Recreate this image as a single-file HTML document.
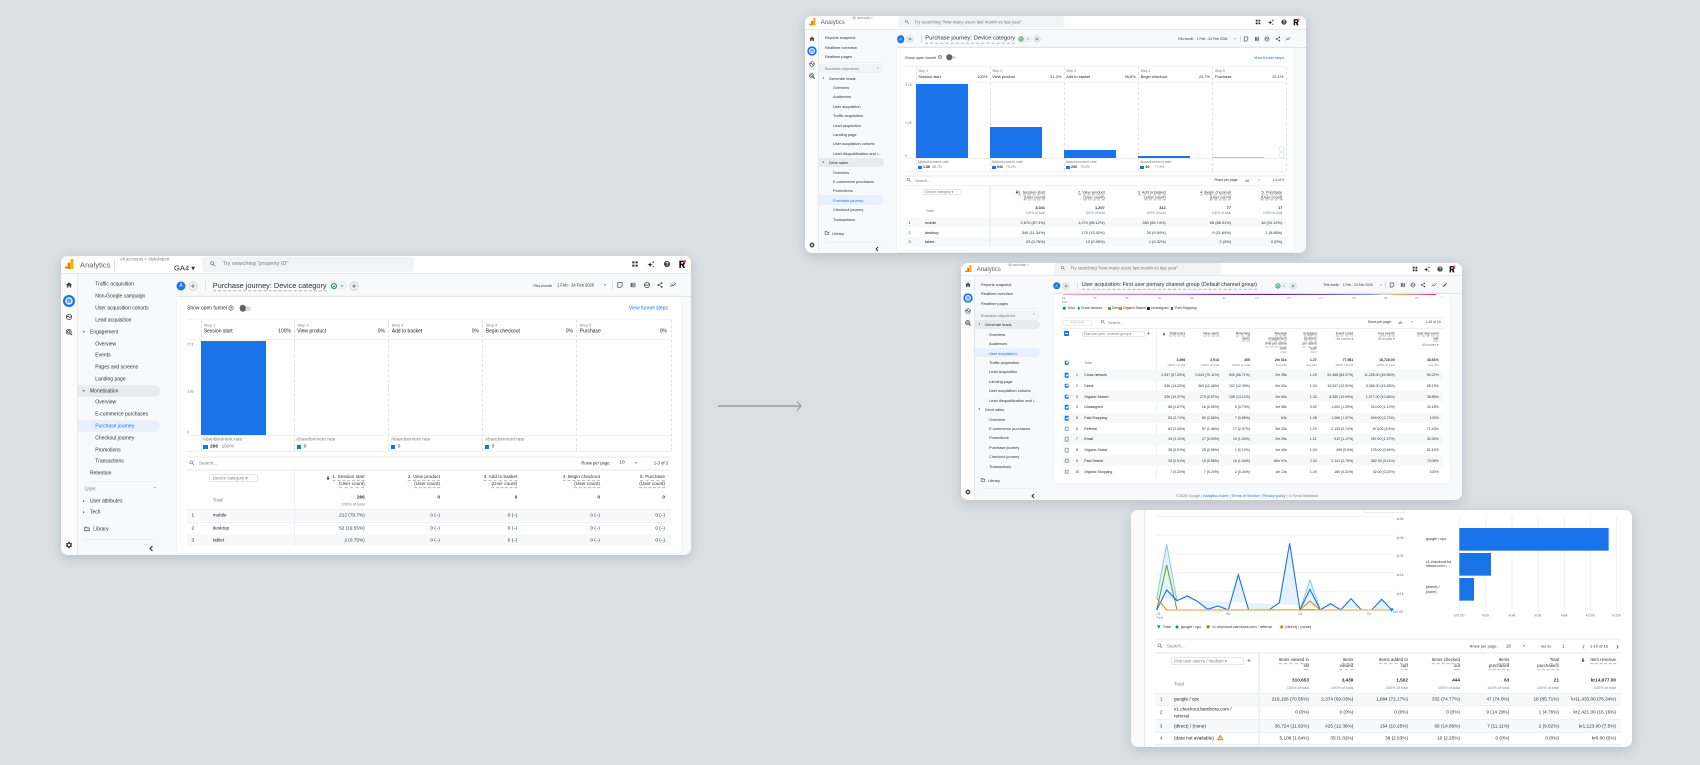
<!DOCTYPE html>
<html lang="en"><head><meta charset="utf-8"><title>Analytics reports</title>
<style>
html,body{margin:0;padding:0}
body{width:1700px;height:765px;overflow:hidden;background:#d9dfe3;position:relative;font-family:"Liberation Sans",sans-serif;color:#2d3033}
#w{position:absolute;left:0;top:0;width:1700px;height:765px;filter:blur(.3px)}
p{position:absolute;margin:0;white-space:nowrap;line-height:1;transform:translateY(-32%);color:#2d3033}
.g{color:#777c81}.bl{color:#1a73e8}.k{font-weight:bold}.d{color:#202124}
.e{transform:translate(-100%,-32%)}.m{transform:translate(-50%,-38%)}
.a{position:absolute}
.card{position:absolute;background:#f8f9fb;border-radius:7px;box-shadow:0 3px 11px rgba(60,70,80,.2)}
.top{position:absolute;background:#fff;border-radius:7px 7px 0 0;border-bottom:.7px solid #e6e8ea;box-sizing:border-box}
.rail{position:absolute;background:#fcfcfd;border-right:.7px solid #e6e8ea;box-sizing:border-box;border-radius:0 0 0 7px}
.w{position:absolute;background:#fff;box-shadow:0 0 2px rgba(0,0,0,.07)}
.srch{position:absolute;background:#f1f3f4;border-radius:3px}
.hl{position:absolute;background:#e8eaed;border-radius:0 6px 6px 0}
.ac{position:absolute;background:#e8f0fe;border-radius:0 6px 6px 0}
.h{position:absolute;height:.8px;background:#eef0f2}
.hh{position:absolute;height:1.5px;background:#f2f3f5}
.v{position:absolute;width:0;border-left:.7px dashed #e0e2e5}
.vv{position:absolute;width:1.4px;background:#eef0f2}
.bar{position:absolute;background:#1a73e8}
.sw{position:absolute;background:#1a73e8}
.row{position:absolute;background:#f7f8f9}
.chip{position:absolute;background:#fff;border:.6px solid #e4e6e9;border-radius:1.5px;box-sizing:border-box}
.pill{position:absolute;background:#eef1f4;border-radius:6px}
.u{border-bottom:.5px dashed #b4b8bc;padding-bottom:.3px}
.i{position:absolute;transform:translate(-50%,-50%);overflow:visible}
.c{position:absolute;top:0;width:0}
.c p{left:0}
.R p{transform:translate(-100%,-32%)}
.f1{font-size:5px}.f2{font-size:3.9px}.f3{font-size:3.9px}.f4{font-size:4.7px}
.s1{font-size:4px}.s2{font-size:3.4px}
.t1 p:nth-child(1){top:477px}.t1 p:nth-child(2){top:484px}.t1 p:nth-child(3){top:497px;font-weight:bold}.t1 p:nth-child(4){top:515.3px}.t1 p:nth-child(5){top:527.7px}.t1 p:nth-child(6){top:539.7px}
.t2 p:nth-child(1){top:191.7px}.t2 p:nth-child(2){top:196.7px}.t2 p:nth-child(3){top:207.3px;font-weight:bold}.t2 p:nth-child(4){top:213px;font-size:3.3px;color:#80868b}.t2 p:nth-child(5){top:222px}.t2 p:nth-child(6){top:231.7px}.t2 p:nth-child(7){top:241.3px}
.t3 p:nth-child(1){top:359.7px;font-weight:bold}.t3 p:nth-child(2){top:365.3px;font-size:3.1px;color:#80868b}.t3 p:nth-child(3){top:375px}.t3 p:nth-child(4){top:385.7px}.t3 p:nth-child(5){top:396.7px}.t3 p:nth-child(6){top:407.3px}.t3 p:nth-child(7){top:418px}.t3 p:nth-child(8){top:428.7px}.t3 p:nth-child(9){top:439.3px}.t3 p:nth-child(10){top:450px}.t3 p:nth-child(11){top:460.7px}.t3 p:nth-child(12){top:471.7px}
.t4 p:nth-child(1){top:680.3px;font-weight:bold}.t4 p:nth-child(2){top:687.7px;font-size:3.8px;color:#80868b}.t4 p:nth-child(3){top:699.3px}.t4 p:nth-child(4){top:712.3px}.t4 p:nth-child(5){top:725.7px}.t4 p:nth-child(6){top:738px}
.cb{position:absolute;width:4.6px;height:4.6px;background:#1a73e8;border-radius:.7px;transform:translate(-50%,-50%)}
.cb:after{content:"";position:absolute;left:1px;top:.7px;width:2.3px;height:1.1px;border-left:.6px solid #fff;border-bottom:.6px solid #fff;transform:rotate(-45deg)}
.cu{position:absolute;width:4.6px;height:4.6px;border:.6px solid #9aa0a6;box-sizing:border-box;border-radius:.6px;transform:translate(-50%,-50%)}
.dot{position:absolute;border-radius:50%;transform:translate(-50%,-50%)}
</style></head><body>
<svg width="0" height="0" style="position:absolute"><defs>
<symbol id="home" viewBox="0 0 24 24"><path fill="#3c4043" d="M10 20v-6h4v6h5v-8h3L12 3 2 12h3v8z"/></symbol>
<symbol id="rep" viewBox="0 0 24 24"><circle cx="12" cy="12" r="12" fill="#1a73e8"/><circle cx="12" cy="12" r="7.6" fill="#e8f0fe"/><path fill="#1a73e8" d="M8 8h8v8H8z" opacity=".75"/><path fill="#e8f0fe" d="M9.5 12h1v3h-1zM11.5 10h1v5h-1zM13.5 13h1v2h-1z"/></symbol>
<symbol id="exp" viewBox="0 0 24 24"><circle cx="12" cy="12" r="8.5" fill="none" stroke="#3c4043" stroke-width="2.4"/><path fill="none" stroke="#3c4043" stroke-width="2.2" d="M4 13l5-4 5 5 6-5"/></symbol>
<symbol id="adv" viewBox="0 0 24 24"><circle cx="11" cy="11" r="8" fill="none" stroke="#3c4043" stroke-width="2.4"/><circle cx="11" cy="11" r="3.5" fill="none" stroke="#3c4043" stroke-width="2.2"/><path stroke="#3c4043" stroke-width="3" d="M16 16l6 6"/></symbol>
<symbol id="gear" viewBox="0 0 24 24"><path fill="#3c4043" d="M19.14 12.94c.04-.3.06-.61.06-.94 0-.32-.02-.64-.07-.94l2.03-1.58a.49.49 0 0 0 .12-.61l-1.92-3.32a.49.49 0 0 0-.59-.22l-2.39.96c-.5-.38-1.03-.7-1.62-.94l-.36-2.54a.48.48 0 0 0-.48-.41h-3.84a.48.48 0 0 0-.47.41l-.36 2.54c-.59.24-1.13.57-1.62.94l-2.39-.96a.48.48 0 0 0-.59.22L2.74 8.87a.48.48 0 0 0 .12.61l2.03 1.58c-.05.3-.09.63-.09.94 0 .31.02.64.07.94l-2.03 1.58a.49.49 0 0 0-.12.61l1.92 3.32c.12.22.37.29.59.22l2.39-.96c.5.38 1.03.7 1.62.94l.36 2.54c.05.24.24.41.48.41h3.84c.24 0 .44-.17.47-.41l.36-2.54c.59-.24 1.13-.56 1.62-.94l2.39.96c.22.08.47 0 .59-.22l1.92-3.32a.49.49 0 0 0-.12-.61l-2.01-1.58zM12 15.6A3.6 3.6 0 1 1 12 8.4a3.6 3.6 0 0 1 0 7.2z"/></symbol>
<symbol id="apps" viewBox="0 0 24 24"><path fill="#202124" d="M3 3h7v7H3zM14 3h7v7h-7zM3 14h7v7H3zM14 14h7v7h-7z"/></symbol>
<symbol id="spk" viewBox="0 0 24 24"><path fill="#202124" d="M9 6l2.2 5.8L17 14l-5.8 2.2L9 22l-2.2-5.8L1 14l5.8-2.2zM19 2l1.2 2.8L23 6l-2.8 1.2L19 10l-1.2-2.8L15 6l2.8-1.2zM19 17l1 2 2 1-2 1-1 2-1-2-2-1 2-1z"/></symbol>
<symbol id="help" viewBox="0 0 24 24"><circle cx="12" cy="12" r="10.5" fill="#3c4043"/><path fill="none" stroke="#fff" stroke-width="2.6" d="M8.6 9.5c0-4.5 6.8-4.5 6.8 0 0 2.6-3.4 2.8-3.4 5.2"/><path fill="#fff" d="M10.7 16.2h2.6v2.6h-2.6z"/></symbol>
<symbol id="rr" viewBox="0 0 24 24"><path fill="#111" d="M4 2h10c5 0 7 3 7 6.500 0 3-1.600 5-4 6l4 9h-6l-3.500-8H9v8H4z"/><path fill="#fff" d="M9 6.500h4.500c1.500 0 2.500.8 2.500 2.200s-1 2.300-2.500 2.300H9z"/><circle cx="20" cy="4" r="4" fill="#ea4335"/></symbol>
<symbol id="srch" viewBox="0 0 24 24"><path fill="#5f6368" d="M15.5 14h-.79l-.28-.27A6.470 6.470 0 0 0 16 9.500 6.500 6.500 0 1 0 9.500 16c1.610 0 3.090-.59 4.230-1.570l.27.28v.79l5 4.990L20.490 19l-4.990-5zm-6 0C7.010 14 5 11.990 5 9.500S7.010 5 9.500 5 14 7.010 14 9.500 11.990 14 9.500 14z"/></symbol>
<symbol id="plus" viewBox="0 0 24 24"><circle cx="12" cy="12" r="11" fill="#fbfbfc" stroke="#bdc1c6" stroke-width="1.800"/><path stroke="#5f6368" stroke-width="2.200" d="M12 6v12M6 12h12"/></symbol>
<symbol id="chk" viewBox="0 0 24 24"><circle cx="12" cy="12" r="10" fill="none" stroke="#188038" stroke-width="3.500"/><path fill="none" stroke="#188038" stroke-width="3" d="M7 12l4 4 6-7"/></symbol>
<symbol id="note" viewBox="0 0 24 24"><path fill="none" stroke="#3c4043" stroke-width="2.600" d="M4 3h16v12l-6 6H4z"/></symbol>
<symbol id="cmp" viewBox="0 0 24 24"><path fill="#5f6368" d="M3 4h8v16H3zM13 2h2v20h-2zM17 4h4v16h-4z"/></symbol>
<symbol id="ins" viewBox="0 0 24 24"><circle cx="12" cy="12" r="9" fill="none" stroke="#3c4043" stroke-width="2.400"/><path fill="none" stroke="#3c4043" stroke-width="2.200" d="M4 14l5-4 4 4 7-6"/></symbol>
<symbol id="shr" viewBox="0 0 24 24"><path fill="none" stroke="#3c4043" stroke-width="2" d="M18 5L6 12l12 7"/><circle cx="18" cy="5" r="3.200" fill="#3c4043"/><circle cx="6" cy="12" r="3.200" fill="#3c4043"/><circle cx="18" cy="19" r="3.200" fill="#3c4043"/></symbol>
<symbol id="trd" viewBox="0 0 24 24"><path fill="none" stroke="#3c4043" stroke-width="2.200" d="M2 18l7-7 4 4 9-9"/><path fill="#3c4043" d="M16 3l2 2-2 2-2-2zM5 5l1.500 1.500L5 8 3.500 6.500z"/></symbol>
<symbol id="pen" viewBox="0 0 24 24"><path fill="#3c4043" d="M3 17.250V21h3.750L17.810 9.940l-3.750-3.750zM20.710 7.040a1 1 0 0 0 0-1.410l-2.340-2.340a1 1 0 0 0-1.410 0l-1.830 1.830 3.750 3.750z"/></symbol>
<symbol id="q" viewBox="0 0 24 24"><circle cx="12" cy="12" r="9.500" fill="none" stroke="#3c4043" stroke-width="2.400"/><path fill="none" stroke="#3c4043" stroke-width="2.200" d="M9.300 10c0-3.300 5.400-3.300 5.400 0 0 2-2.700 2-2.700 4"/><path fill="#3c4043" d="M11 15.500h2v2h-2z"/></symbol>
<symbol id="lib" viewBox="0 0 24 24"><path fill="none" stroke="#3c4043" stroke-width="2.600" d="M3 5h7l2 3h9v11H3z"/></symbol>
<symbol id="dn" viewBox="0 0 24 24"><path fill="#5f6368" d="M5 8h14l-7 9z"/></symbol>
<symbol id="darr" viewBox="0 0 24 24"><path fill="#3c4043" d="M9 2h6v11h6L12 23 3 13h6z"/></symbol>
<symbol id="logo" viewBox="0 0 20 24"><path fill="#f9ab00" d="M13 0h7v24h-7z"/><path fill="#e37400" d="M6.500 9h6v15h-6z"/><circle cx="3" cy="20.500" r="3" fill="#e37400"/></symbol>
</defs></svg>
<div id="w">

<!-- arrow -->
<div class="a" style="left:718px;top:405.300px;width:83px;height:1.500px;background:#a9adaf"></div>
<svg class="a" style="left:795px;top:401px;width:7px;height:10px"><path d="M2 .5L6 5 2 9.500" fill="none" stroke="#8f9497" stroke-width="1"/></svg>

<!-- CARD 1 -->
<div class="card" style="left:61px;top:256px;width:629.500px;height:299px"></div>
<div class="top" style="left:61px;top:256px;width:629.500px;height:18px"></div>
<div class="rail" style="left:61px;top:274px;width:17px;height:281px"></div>
<div class="w" style="left:177px;top:296px;width:503.700px;height:257.300px;border-radius:3px"></div>
<div class="a" style="left:177px;top:295.500px;width:513.500px;height:.7px;background:#e2e4e7"></div>
<svg class="a" style="left:65px;top:259px;width:8.500px;height:10px"><use href="#logo"/></svg>
<div class="f1">
<p style="left:80px;top:264.300px;font-size:7.600px;color:#5f6368">Analytics</p>
<div class="a" style="left:114px;top:259px;width:.7px;height:11px;background:#dadce0"></div>
<p class="g" style="left:120px;top:259.300px;font-size:4.300px">All accounts &gt; Styleksport</p>
<p style="left:174px;top:266.700px;font-size:7.600px">GA4 ▾</p>
<div class="srch" style="left:202px;top:256.700px;width:212px;height:15.300px"></div>
<svg class="i" style="left:213px;top:263.700px;width:7px;height:7px"><use href="#srch"/></svg>
<p class="g" style="left:222.700px;top:263.700px;font-size:5.500px">Try searching "property ID"</p>
<svg class="i" style="left:635px;top:264px;width:7px;height:7px"><use href="#apps"/></svg>
<svg class="i" style="left:650.700px;top:264px;width:7.500px;height:7.500px"><use href="#spk"/></svg>
<svg class="i" style="left:667px;top:264px;width:7px;height:7px"><use href="#help"/></svg>
<svg class="i" style="left:682px;top:264px;width:8px;height:8px"><use href="#rr"/></svg>
<svg class="i" style="left:69px;top:285px;width:7.500px;height:7.500px"><use href="#home"/></svg>
<svg class="i" style="left:69px;top:301px;width:12px;height:12px"><use href="#rep"/></svg>
<svg class="i" style="left:69px;top:316.500px;width:7.500px;height:7.500px"><use href="#exp"/></svg>
<svg class="i" style="left:69px;top:332px;width:7.500px;height:7.500px"><use href="#adv"/></svg>
<svg class="i" style="left:69px;top:545px;width:8px;height:8px"><use href="#gear"/></svg>
<div class="hl" style="left:78px;top:385px;width:82px;height:11.700px"></div>
<div class="ac" style="left:78px;top:420px;width:82px;height:12px"></div>
<div class="c" style="left:95.300px">
<p style="top:284.300px">Traffic acquisition</p><p style="top:296.300px">Non-Google campaign</p><p style="top:308px">User acquisition cohorts</p><p style="top:320px">Lead acquisition</p>
<p style="top:343.700px">Overview</p><p style="top:355.300px">Events</p><p style="top:367px">Pages and screens</p><p style="top:379px">Landing page</p>
<p style="top:402.300px">Overview</p><p style="top:414.300px">E-commerce purchases</p><p class="bl" style="top:426px">Purchase journey</p><p style="top:438px">Checkout journey</p><p style="top:449.700px">Promotions</p><p style="top:461.300px">Transactions</p>
</div>
<div class="c" style="left:90px">
<p style="top:331.700px">Engagement</p><p style="top:390.700px">Monetisation</p><p style="top:473.300px">Retention</p><p class="g" style="top:489px;left:-5px">User</p><p style="top:500.700px">User attributes</p><p style="top:512.300px">Tech</p>
<p style="top:528.700px;left:3.300px">Library</p>
</div>
<div class="c" style="left:83px">
<p style="top:331.700px;font-size:3.500px">▾</p><p style="top:390.700px;font-size:3.500px">▾</p><p style="top:500.700px;font-size:3.500px">▸</p><p style="top:512.300px;font-size:3.500px">▸</p>
</div>
<p class="g" style="left:153px;top:489px;font-size:5px">⌃</p>
<svg class="i" style="left:86.700px;top:528.700px;width:6px;height:6px"><use href="#lib"/></svg>
<div class="h" style="left:82px;top:481px;width:74px;height:1.200px"></div>
<div class="h" style="left:82px;top:539.300px;width:74px;height:1.200px"></div>
<svg class="a" style="left:149px;top:545px;width:5px;height:7px"><path d="M3.500 1L1 3.500 3.500 6" fill="none" stroke="#202124" stroke-width="1"/></svg>
<!-- header row -->
<div class="dot" style="left:181px;top:285.700px;width:9px;height:9px;background:#1a73e8"></div>
<p class="m" style="left:181px;top:285.700px;font-size:5px;color:#fff">A</p>
<svg class="i" style="left:193px;top:285.700px;width:9px;height:9px"><use href="#plus"/></svg>
<div class="a" style="left:205px;top:281px;width:.7px;height:9px;background:#dadce0"></div>
<p class="u" style="left:212.700px;top:285.400px;font-size:7.350px">Purchase journey: Device category</p>
<div class="pill" style="left:328px;top:281px;width:19.500px;height:9px"></div>
<svg class="i" style="left:333.500px;top:285.700px;width:6px;height:6px"><use href="#chk"/></svg>
<svg class="i" style="left:342px;top:285.700px;width:4px;height:4px"><use href="#dn"/></svg>
<svg class="i" style="left:353.500px;top:285.700px;width:9px;height:9px"><use href="#plus"/></svg>
<p style="left:532.700px;top:285px;font-size:3.900px">This month</p><p style="left:557px;top:285px;font-size:4.100px">1 Feb - 24 Feb 2026</p>
<svg class="i" style="left:605px;top:285px;width:4px;height:4px"><use href="#dn"/></svg>
<div class="a" style="left:612px;top:281px;width:.7px;height:8px;background:#dadce0"></div>
<svg class="i" style="left:619.700px;top:285px;width:6.500px;height:6.500px"><use href="#note"/></svg>
<svg class="i" style="left:632.700px;top:285px;width:6.500px;height:6.500px"><use href="#cmp"/></svg>
<svg class="i" style="left:646.700px;top:285px;width:7px;height:7px"><use href="#ins"/></svg>
<svg class="i" style="left:659.700px;top:285px;width:6.500px;height:6.500px"><use href="#shr"/></svg>
<svg class="i" style="left:673px;top:285px;width:7px;height:7px"><use href="#trd"/></svg>
<!-- funnel -->
<p style="left:187px;top:308.300px">Show open funnel</p>
<svg class="i" style="left:231.300px;top:308.300px;width:5.500px;height:5.500px"><use href="#q"/></svg>
<div class="a" style="left:241px;top:306px;width:10px;height:4.500px;background:#dadce0;border-radius:3px"></div>
<div class="dot" style="left:242.500px;top:308.300px;width:6.500px;height:6.500px;background:#5f6368"></div>
<p class="bl e" style="left:668px;top:308.300px">View funnel steps</p>
<div class="hh" style="left:187px;top:318.800px;width:483.700px"></div>
<div class="hh" style="left:187px;top:338.500px;width:483.700px"></div>
<div class="v" style="left:200.700px;top:320px;height:131px"></div><div class="v" style="left:294.300px;top:320px;height:131px"></div><div class="v" style="left:388.300px;top:320px;height:131px"></div><div class="v" style="left:482.300px;top:320px;height:131px"></div><div class="v" style="left:576.300px;top:320px;height:131px"></div><div class="v" style="left:670.500px;top:320px;height:131px"></div>
<div class="s1">
<p class="g" style="left:203.700px;top:325px">Step 1</p><p class="g" style="left:297.300px;top:325px">Step 2</p><p class="g" style="left:391.700px;top:325px">Step 3</p><p class="g" style="left:485.700px;top:325px">Step 4</p><p class="g" style="left:579.700px;top:325px">Step 5</p>
<p class="g" style="left:187px;top:343.700px">271</p><p class="g" style="left:187px;top:391px">136</p><p class="g" style="left:187px;top:432px">0</p>
</div>
<p class="d" style="left:203.700px;top:331.300px">Session start</p><p class="d" style="left:297.300px;top:331.300px">View product</p><p class="d" style="left:391.700px;top:331.300px">Add to basket</p><p class="d" style="left:485.700px;top:331.300px">Begin checkout</p><p class="d" style="left:579.700px;top:331.300px">Purchase</p>
<p class="e" style="left:291px;top:331.300px">100%</p><p class="e" style="left:385px;top:331.300px">0%</p><p class="e" style="left:479px;top:331.300px">0%</p><p class="e" style="left:573px;top:331.300px">0%</p><p class="e" style="left:667px;top:331.300px">0%</p>
<div class="bar" style="left:200.700px;top:341.300px;width:65.300px;height:93.700px"></div>
<div class="h" style="left:187px;top:435px;width:483.700px"></div>
<div class="h" style="left:187px;top:451px;width:483.700px"></div>
<div style="font-size:4.800px">
<p class="g" style="left:202.700px;top:440px">Abandonment rate</p><p class="g" style="left:296px;top:440px">Abandonment rate</p><p class="g" style="left:391px;top:440px">Abandonment rate</p><p class="g" style="left:485px;top:440px">Abandonment rate</p>
<div class="sw" style="left:203px;top:444.500px;width:4.500px;height:4.500px"></div><div class="sw" style="left:296.700px;top:444.500px;width:4.500px;height:4.500px"></div><div class="sw" style="left:390.700px;top:444.500px;width:4.500px;height:4.500px"></div><div class="sw" style="left:484.700px;top:444.500px;width:4.500px;height:4.500px"></div>
<p class="k" style="left:210px;top:446.700px">266</p><p class="g" style="left:221.600px;top:446.700px">100%</p><p style="left:303.700px;top:446.700px">0</p><p style="left:397.700px;top:446.700px">0</p><p style="left:491.700px;top:446.700px">0</p>
</div>
<!-- table -->
<div class="hh" style="left:187px;top:456.200px;width:483.700px"></div>
<svg class="i" style="left:191.700px;top:463px;width:6.500px;height:6.500px"><use href="#srch"/></svg>
<p class="g" style="left:199px;top:463px;font-size:4.500px">Search...</p>
<div style="font-size:4.200px"><p class="e" style="left:610.700px;top:463px">Rows per page:</p><p style="left:619.300px;top:463px;font-size:4.800px">10</p><p class="e" style="left:668px;top:463px">1-3 of 3</p></div>
<svg class="i" style="left:636px;top:463px;width:4px;height:4px"><use href="#dn"/></svg>
<div class="hh" style="left:187px;top:469.200px;width:483.700px"></div>
<div class="row" style="left:187px;top:509.300px;width:483.700px;height:12px"></div>
<div class="row" style="left:187px;top:533.700px;width:483.700px;height:12px"></div>
<div class="h" style="left:187px;top:521.800px;width:483.700px"></div><div class="h" style="left:187px;top:509px;width:483.700px"></div>
<div class="vv" style="left:293.500px;top:470px;height:76px"></div>
<div class="chip" style="left:209.300px;top:474px;width:49px;height:8px"></div>
<p class="g" style="left:212.700px;top:478px;font-size:4.400px">Device category ▾</p>
<p class="g" style="left:212.700px;top:500px;font-size:4.700px">Total</p>
<div style="font-size:4.700px">
<p style="left:191.500px;top:515.300px">1</p><p style="left:191.500px;top:527.700px">2</p><p style="left:191.500px;top:539.700px">3</p>
<p class="d" style="left:212.700px;top:515.300px">mobile</p><p class="d" style="left:212.700px;top:527.700px">desktop</p><p class="d" style="left:212.700px;top:539.700px">tablet</p>
<svg class="i" style="left:328px;top:477.500px;width:4.500px;height:4.500px"><use href="#darr"/></svg>
<div class="c R t1" style="left:364.700px"><p class="u">1. Session start</p><p class="u">(User count)</p><p>266</p><p>212 (79.7%)</p><p>52 (19.55%)</p><p>2 (0.75%)</p><p class="g" style="top:504px;font-size:4px">100% of total</p></div>
<div class="c R t1" style="left:440px"><p class="u">2. View product</p><p class="u">(User count)</p><p>0</p><p>0 (–)</p><p>0 (–)</p><p>0 (–)</p></div>
<div class="c R t1" style="left:517.300px"><p class="u">3. Add to basket</p><p class="u">(User count)</p><p>0</p><p>0 (–)</p><p>0 (–)</p><p>0 (–)</p></div>
<div class="c R t1" style="left:600px"><p class="u">4. Begin checkout</p><p class="u">(User count)</p><p>0</p><p>0 (–)</p><p>0 (–)</p><p>0 (–)</p></div>
<div class="c R t1" style="left:665px"><p class="u">5. Purchase</p><p class="u">(User count)</p><p>0</p><p>0 (–)</p><p>0 (–)</p><p>0 (–)</p></div>
</div>
</div>

<!-- CARD 2 -->
<div class="card" style="left:805px;top:16px;width:501px;height:237px"></div>
<div class="top" style="left:805px;top:16px;width:501px;height:14px"></div>
<div class="rail" style="left:805px;top:30px;width:14.300px;height:223px"></div>
<div class="w" style="left:897.300px;top:47.300px;width:397px;height:205px"></div>
<div class="a" style="left:897px;top:47px;width:409px;height:.7px;background:#e2e4e7"></div>
<svg class="a" style="left:809px;top:18.300px;width:6.700px;height:7.500px"><use href="#logo"/></svg>
<div class="f2">
<p style="left:820.700px;top:22.300px;font-size:6px;color:#5f6368">Analytics</p>
<p class="g" style="left:852.300px;top:18.300px;font-size:3.300px">All accounts &gt;</p>
<div class="srch" style="left:897.700px;top:16.300px;width:166.600px;height:12px"></div>
<svg class="i" style="left:906.700px;top:21.700px;width:5.500px;height:5.500px"><use href="#srch"/></svg>
<p class="g" style="left:914.300px;top:21.700px;font-size:4.400px">Try searching "how many users last month vs last year"</p>
<svg class="i" style="left:1258.300px;top:22.300px;width:6px;height:6px"><use href="#apps"/></svg>
<svg class="i" style="left:1271px;top:22.300px;width:6.500px;height:6.500px"><use href="#spk"/></svg>
<svg class="i" style="left:1283.700px;top:22.300px;width:6px;height:6px"><use href="#help"/></svg>
<svg class="i" style="left:1295.700px;top:22.300px;width:7px;height:7px"><use href="#rr"/></svg>
<svg class="i" style="left:812.300px;top:38.700px;width:6.500px;height:6.500px"><use href="#home"/></svg>
<svg class="i" style="left:812.300px;top:51.300px;width:9.500px;height:9.500px"><use href="#rep"/></svg>
<svg class="i" style="left:812.300px;top:64px;width:6.500px;height:6.500px"><use href="#exp"/></svg>
<svg class="i" style="left:812.300px;top:76.300px;width:6.500px;height:6.500px"><use href="#adv"/></svg>
<svg class="i" style="left:812.300px;top:245.300px;width:6.500px;height:6.500px"><use href="#gear"/></svg>
<div class="hl" style="left:819.300px;top:64px;width:64.700px;height:9px;background:#f1f3f4"></div>
<div class="hl" style="left:819.300px;top:157.700px;width:64.700px;height:9.300px"></div>
<div class="ac" style="left:819.300px;top:195.300px;width:64.700px;height:9.400px"></div>
<div class="c" style="left:825px"><p style="top:37.300px">Reports snapshot</p><p style="top:46.700px">Realtime overview</p><p style="top:56px">Realtime pages</p><p class="g" style="top:68.300px">Business objectives</p></div>
<div class="c" style="left:829px"><p style="top:77.700px">Generate leads</p><p style="top:162.300px">Drive sales</p><p style="top:232.700px;left:3px">Library</p></div>
<div class="c" style="left:833px"><p style="top:87px">Overview</p><p style="top:96.300px">Audiences</p><p style="top:105.700px">User acquisition</p><p style="top:115.300px">Traffic acquisition</p><p style="top:124.700px">Lead acquisition</p><p style="top:134px">Landing page</p><p style="top:143.300px">User acquisition cohorts</p><p style="top:152.700px">Lead disqualification and i...</p><p style="top:171.700px">Overview</p><p style="top:181px">E-commerce purchases</p><p style="top:190.300px">Promotions</p><p class="bl" style="top:200px">Purchase journey</p><p style="top:209.300px">Checkout journey</p><p style="top:218.700px">Transactions</p></div>
<p style="left:822.500px;top:77.700px;font-size:3px">▾</p><p style="left:822.500px;top:162.300px;font-size:3px">▾</p>
<p class="g" style="left:876px;top:68.500px;font-size:4.500px">⌃</p>
<svg class="i" style="left:826.500px;top:232.700px;width:5px;height:5px"><use href="#lib"/></svg>
<div class="h" style="left:825px;top:62.300px;width:56px"></div><div class="h" style="left:825px;top:241.700px;width:56px"></div>
<svg class="a" style="left:875px;top:245.500px;width:4.500px;height:6px"><path d="M3 1L1 3l2 2" fill="none" stroke="#202124" stroke-width=".9"/></svg>
<div class="dot" style="left:900.700px;top:39px;width:7.500px;height:7.500px;background:#1a73e8"></div>
<p class="m" style="left:900.700px;top:39px;font-size:4.200px;color:#fff">A</p>
<svg class="i" style="left:910px;top:39px;width:7px;height:7px"><use href="#plus"/></svg>
<div class="a" style="left:920.700px;top:35px;width:.7px;height:7.500px;background:#dadce0"></div>
<p class="u" style="left:925.300px;top:38.800px;font-size:5.800px">Purchase journey: Device category</p>
<div class="pill" style="left:1016.700px;top:35.500px;width:15px;height:7px"></div>
<svg class="i" style="left:1020.500px;top:39px;width:5px;height:5px"><use href="#chk"/></svg>
<svg class="i" style="left:1027.500px;top:39px;width:3px;height:3px"><use href="#dn"/></svg>
<svg class="i" style="left:1037px;top:39px;width:7px;height:7px"><use href="#plus"/></svg>
<p style="left:1177.700px;top:38.700px;font-size:3.200px">This month</p><p style="left:1196.700px;top:38.700px;font-size:3.400px">1 Feb - 24 Feb 2026</p>
<svg class="i" style="left:1235px;top:38.700px;width:3px;height:3px"><use href="#dn"/></svg>
<div class="a" style="left:1240px;top:35.500px;width:.6px;height:6.500px;background:#dadce0"></div>
<svg class="i" style="left:1246.300px;top:38.700px;width:5.500px;height:5.500px"><use href="#note"/></svg>
<svg class="i" style="left:1257px;top:38.700px;width:5.500px;height:5.500px"><use href="#cmp"/></svg>
<svg class="i" style="left:1267px;top:38.700px;width:5.500px;height:5.500px"><use href="#ins"/></svg>
<svg class="i" style="left:1277.700px;top:38.700px;width:5.500px;height:5.500px"><use href="#shr"/></svg>
<svg class="i" style="left:1288.300px;top:38.700px;width:5.500px;height:5.500px"><use href="#trd"/></svg>
<p style="left:905px;top:57.300px">Show open funnel</p>
<svg class="i" style="left:940px;top:57.300px;width:4.500px;height:4.500px"><use href="#q"/></svg>
<div class="a" style="left:947px;top:55.500px;width:9px;height:3.500px;background:#dadce0;border-radius:3px"></div>
<div class="dot" style="left:949px;top:57.300px;width:5.500px;height:5.500px;background:#5f6368"></div>
<p class="bl e" style="left:1284.300px;top:57.300px">View funnel steps</p>
<div class="hh" style="left:905px;top:65.800px;width:381px"></div>
<div class="hh" style="left:905px;top:81.800px;width:381px"></div>
<div class="v" style="left:915.700px;top:67px;height:104px"></div><div class="v" style="left:989.700px;top:67px;height:104px"></div><div class="v" style="left:1063.700px;top:67px;height:104px"></div><div class="v" style="left:1138px;top:67px;height:104px"></div><div class="v" style="left:1212.300px;top:67px;height:104px"></div><div class="v" style="left:1286px;top:67px;height:104px"></div>
<div class="s2">
<p class="g" style="left:918.300px;top:70.700px">Step 1</p><p class="g" style="left:992.300px;top:70.700px">Step 2</p><p class="g" style="left:1066.300px;top:70.700px">Step 3</p><p class="g" style="left:1140.700px;top:70.700px">Step 4</p><p class="g" style="left:1215px;top:70.700px">Step 5</p>
<p class="g" style="left:905px;top:85px">3.1K</p><p class="g" style="left:905px;top:122.700px">1.5K</p><p class="g" style="left:905px;top:155.700px">0</p>
</div>
<p class="d" style="left:918.300px;top:75.700px">Session start</p><p class="d" style="left:992.300px;top:75.700px">View product</p><p class="d" style="left:1066.300px;top:75.700px">Add to basket</p><p class="d" style="left:1140.700px;top:75.700px">Begin checkout</p><p class="d" style="left:1215px;top:75.700px">Purchase</p>
<p class="e" style="left:987.300px;top:75.700px">100%</p><p class="e" style="left:1061.300px;top:75.700px">41.3%</p><p class="e" style="left:1135.700px;top:75.700px">26.8%</p><p class="e" style="left:1210px;top:75.700px">24.7%</p><p class="e" style="left:1283.300px;top:75.700px">22.1%</p>
<div class="bar" style="left:916px;top:83.700px;width:51.700px;height:74.300px"></div>
<div class="bar" style="left:990px;top:127px;width:51.700px;height:31px"></div>
<div class="bar" style="left:1064px;top:150.300px;width:51.700px;height:7.700px"></div>
<div class="bar" style="left:1138.300px;top:156px;width:51.700px;height:2px"></div>
<div class="bar" style="left:1212.300px;top:157px;width:51.700px;height:1px;background:#a8c7fa"></div>
<div class="dot" style="left:1282.300px;top:149px;width:4px;height:4px;border:.5px solid #e4e6e9"></div><div class="dot" style="left:1282.300px;top:154.700px;width:4px;height:4px;border:.5px solid #e4e6e9"></div>
<div class="h" style="left:905px;top:158px;width:381px"></div><div class="h" style="left:905px;top:171px;width:381px"></div>
<p class="g" style="left:917.500px;top:162.300px;font-size:3.800px">Abandonment rate</p><p class="g" style="left:991.500px;top:162.300px;font-size:3.800px">Abandonment rate</p><p class="g" style="left:1065.500px;top:162.300px;font-size:3.800px">Abandonment rate</p><p class="g" style="left:1140px;top:162.300px;font-size:3.800px">Abandonment rate</p>
<div class="sw" style="left:918px;top:165.500px;width:3.500px;height:3.500px"></div><div class="sw" style="left:992px;top:165.500px;width:3.500px;height:3.500px"></div><div class="sw" style="left:1066px;top:165.500px;width:3.500px;height:3.500px"></div><div class="sw" style="left:1140.300px;top:165.500px;width:3.500px;height:3.500px"></div>
<p class="k" style="left:923px;top:167.300px;font-size:3.500px">1.8K</p><p class="g" style="left:932px;top:167.300px;font-size:3.500px">58.7%</p>
<p class="k" style="left:997px;top:167.300px;font-size:3.500px">943</p><p class="g" style="left:1006px;top:167.300px;font-size:3.500px">75.2%</p>
<p class="k" style="left:1071px;top:167.300px;font-size:3.500px">230</p><p class="g" style="left:1080px;top:167.300px;font-size:3.500px">75.2%</p>
<p class="k" style="left:1145.500px;top:167.300px;font-size:3.500px">60</p><p class="g" style="left:1154.500px;top:167.300px;font-size:3.500px">77.9%</p>
<div class="hh" style="left:905px;top:175px;width:381px"></div>
<svg class="i" style="left:909.300px;top:180.300px;width:5.500px;height:5.500px"><use href="#srch"/></svg>
<p class="g" style="left:915px;top:180.300px">Search...</p>
<p class="e" style="left:1238.300px;top:180.300px;font-size:3.400px">Rows per page:</p><p style="left:1245px;top:180.300px">10</p><p class="e" style="left:1284px;top:180.300px;font-size:3.400px">1-3 of 3</p>
<svg class="i" style="left:1259px;top:180.300px;width:3px;height:3px"><use href="#dn"/></svg>
<div class="hh" style="left:905px;top:184.500px;width:381px"></div>
<div class="row" style="left:905px;top:217.700px;width:381px;height:9.300px"></div><div class="row" style="left:905px;top:236.700px;width:381px;height:9.300px"></div>
<div class="vv" style="left:989.300px;top:185px;height:61px"></div>
<div class="chip" style="left:923.300px;top:189.300px;width:38.400px;height:6px"></div>
<p class="g" style="left:925.500px;top:192.300px;font-size:3.500px">Device category ▾</p>
<p class="g" style="left:925.700px;top:210.300px">Total</p>
<p style="left:908.500px;top:222px">1</p><p style="left:908.500px;top:231.700px">2</p><p style="left:908.500px;top:241.300px">3</p>
<p class="d" style="left:925px;top:222px">mobile</p><p class="d" style="left:925px;top:231.700px">desktop</p><p class="d" style="left:925px;top:241.300px">tablet</p>
<svg class="i" style="left:1016.500px;top:192px;width:3.800px;height:3.800px"><use href="#darr"/></svg>
<div class="c R t2" style="left:1045px"><p class="u">1. Session start</p><p class="u">(User count)</p><p>3,041</p><p>100% of total</p><p>2,670 (87.3%)</p><p>345 (11.34%)</p><p>23 (0.76%)</p></div>
<div class="c R t2" style="left:1104.700px"><p class="u">2. View product</p><p class="u">(User count)</p><p>1,207</p><p>100% of total</p><p>1,070 (85.12%)</p><p>175 (13.92%)</p><p>12 (0.95%)</p></div>
<div class="c R t2" style="left:1165.700px"><p class="u">3. Add to basket</p><p class="u">(User count)</p><p>312</p><p>100% of total</p><p>280 (89.74%)</p><p>30 (9.54%)</p><p>1 (0.32%)</p></div>
<div class="c R t2" style="left:1231px"><p class="u">4. Begin checkout</p><p class="u">(User count)</p><p>77</p><p>100% of total</p><p>68 (88.31%)</p><p>9 (11.69%)</p><p>0 (0%)</p></div>
<div class="c R t2" style="left:1282.300px"><p class="u">5. Purchase</p><p class="u">(User count)</p><p>17</p><p>100% of total</p><p>16 (94.12%)</p><p>1 (5.88%)</p><p>0 (0%)</p></div>
</div>

<!-- CARD 3 -->
<div class="card" style="left:961px;top:263px;width:500.700px;height:237px"></div>
<div class="top" style="left:961px;top:263px;width:500.700px;height:13.300px"></div>
<div class="rail" style="left:961px;top:276.300px;width:14.300px;height:223.700px"></div>
<div class="w" style="left:1054px;top:293.300px;width:396px;height:190px;border-radius:2px"></div>
<div class="a" style="left:1053px;top:293px;width:408.700px;height:.7px;background:#e2e4e7"></div>
<svg class="a" style="left:965px;top:265px;width:6.700px;height:7.300px"><use href="#logo"/></svg>
<div class="f3">
<p style="left:976.700px;top:268.700px;font-size:6px;color:#5f6368">Analytics</p>
<p class="g" style="left:1008.300px;top:264.700px;font-size:3.300px">All accounts &gt;</p>
<div class="srch" style="left:1054px;top:263.300px;width:166.700px;height:11.700px"></div>
<svg class="i" style="left:1062.700px;top:268.300px;width:5.500px;height:5.500px"><use href="#srch"/></svg>
<p class="g" style="left:1070.300px;top:268.300px;font-size:4.400px">Try searching "how many users last month vs last year"</p>
<svg class="i" style="left:1414.700px;top:268.700px;width:6px;height:6px"><use href="#apps"/></svg>
<svg class="i" style="left:1427.300px;top:268.700px;width:6.500px;height:6.500px"><use href="#spk"/></svg>
<svg class="i" style="left:1440px;top:268.700px;width:6px;height:6px"><use href="#help"/></svg>
<svg class="i" style="left:1452px;top:268.700px;width:7px;height:7px"><use href="#rr"/></svg>
<svg class="i" style="left:968.300px;top:285.300px;width:6.500px;height:6.500px"><use href="#home"/></svg>
<svg class="i" style="left:968.300px;top:298px;width:9.500px;height:9.500px"><use href="#rep"/></svg>
<svg class="i" style="left:968.300px;top:310.700px;width:6.500px;height:6.500px"><use href="#exp"/></svg>
<svg class="i" style="left:968.300px;top:323px;width:6.500px;height:6.500px"><use href="#adv"/></svg>
<svg class="i" style="left:968.300px;top:492px;width:6.500px;height:6.500px"><use href="#gear"/></svg>
<div class="hl" style="left:975.300px;top:311px;width:64.700px;height:8.700px;background:#f1f3f4"></div>
<div class="hl" style="left:975.300px;top:319.700px;width:64.700px;height:9.300px"></div>
<div class="ac" style="left:975.300px;top:348px;width:64.700px;height:9.400px"></div>
<div class="c" style="left:981px"><p style="top:284px">Reports snapshot</p><p style="top:293.300px">Realtime overview</p><p style="top:302.700px">Realtime pages</p><p class="g" style="top:315px">Business objectives</p></div>
<div class="c" style="left:985px"><p style="top:324.300px">Generate leads</p><p style="top:409.300px">Drive sales</p><p style="top:479.700px;left:3px">Library</p></div>
<div class="c" style="left:989px"><p style="top:334px">Overview</p><p style="top:343.300px">Audiences</p><p class="bl" style="top:352.700px">User acquisition</p><p style="top:362px">Traffic acquisition</p><p style="top:371.300px">Lead acquisition</p><p style="top:381px">Landing page</p><p style="top:390.300px">User acquisition cohorts</p><p style="top:399.700px">Lead disqualification and i...</p><p style="top:418.700px">Overview</p><p style="top:428px">E-commerce purchases</p><p style="top:437.300px">Promotions</p><p style="top:446.700px">Purchase journey</p><p style="top:456.300px">Checkout journey</p><p style="top:465.700px">Transactions</p></div>
<p style="left:978.500px;top:324.300px;font-size:3px">▾</p><p style="left:978.500px;top:409.300px;font-size:3px">▾</p>
<p class="g" style="left:1032px;top:315.200px;font-size:4.500px">⌃</p>
<svg class="i" style="left:982.500px;top:479.700px;width:5px;height:5px"><use href="#lib"/></svg>
<div class="h" style="left:981px;top:308.300px;width:56px"></div><div class="h" style="left:981px;top:488.300px;width:56px"></div>
<svg class="a" style="left:1031px;top:492.500px;width:4.500px;height:6px"><path d="M3 1L1 3l2 2" fill="none" stroke="#202124" stroke-width=".9"/></svg>
<div class="dot" style="left:1056.700px;top:285.700px;width:7.500px;height:7.500px;background:#1a73e8"></div>
<p class="m" style="left:1056.700px;top:285.700px;font-size:4.200px;color:#fff">A</p>
<svg class="i" style="left:1066.300px;top:285.700px;width:7px;height:7px"><use href="#plus"/></svg>
<div class="a" style="left:1076.700px;top:281.500px;width:.7px;height:7.500px;background:#dadce0"></div>
<p class="u" style="left:1081.700px;top:285px;font-size:5.350px">User acquisition: First user primary channel group (Default channel group)</p>
<div class="pill" style="left:1273.500px;top:282px;width:15px;height:7px"></div>
<svg class="i" style="left:1277.500px;top:285.500px;width:5px;height:5px"><use href="#chk"/></svg>
<svg class="i" style="left:1284px;top:285.500px;width:3px;height:3px"><use href="#dn"/></svg>
<svg class="i" style="left:1293.300px;top:285.700px;width:7px;height:7px"><use href="#plus"/></svg>
<p style="left:1323.300px;top:285.300px;font-size:3.200px">This month</p><p style="left:1342.700px;top:285.300px;font-size:3.300px">1 Feb - 24 Feb 2026</p>
<svg class="i" style="left:1380.700px;top:285.300px;width:3px;height:3px"><use href="#dn"/></svg>
<div class="a" style="left:1385px;top:282px;width:.6px;height:6.500px;background:#dadce0"></div>
<svg class="i" style="left:1392px;top:285.300px;width:5.500px;height:5.500px"><use href="#note"/></svg>
<svg class="i" style="left:1402.700px;top:285.300px;width:5.500px;height:5.500px"><use href="#cmp"/></svg>
<svg class="i" style="left:1413px;top:285.300px;width:5.500px;height:5.500px"><use href="#ins"/></svg>
<svg class="i" style="left:1423.300px;top:285.300px;width:5.500px;height:5.500px"><use href="#shr"/></svg>
<svg class="i" style="left:1434px;top:285.300px;width:5.500px;height:5.500px"><use href="#trd"/></svg>
<svg class="i" style="left:1444.700px;top:285.300px;width:5px;height:5px"><use href="#pen"/></svg>
<!-- chart strip -->
<div class="a" style="left:1062.700px;top:293.800px;width:373px;height:1.700px;background:linear-gradient(90deg,#f3a5d0 0%,#e77fc0 15%,#c66ab5 30%,#8e3aa0 40%,#5b1d8f 55%,#7a4fa8 70%,#7f9fd8 83%,#cfd8ee 86%,#f5a65b 90%,#ec6aa8 96%,#d81b8a 100%)"></div>
<div style="font-size:3.100px" class="g">
<p class="g" style="left:1062px;top:298px">01</p><p class="g" style="left:1062px;top:301.500px">Feb</p><p class="g" style="left:1093px;top:298px">03</p><p class="g" style="left:1125px;top:298px">05</p><p class="g" style="left:1158px;top:298px">07</p><p class="g" style="left:1190px;top:298px">09</p><p class="g" style="left:1222.500px;top:298px">11</p><p class="g" style="left:1255px;top:298px">13</p><p class="g" style="left:1287px;top:298px">15</p><p class="g" style="left:1319px;top:298px">17</p><p class="g" style="left:1352px;top:298px">19</p><p class="g" style="left:1384px;top:298px">21</p><p class="g" style="left:1415px;top:298px">23</p><p class="g" style="left:1441px;top:297px;font-size:4px">›</p>
</div>
<div style="font-size:3.300px">
<div class="dot" style="left:1064px;top:308.300px;width:2.600px;height:2.600px;background:#137db8"></div><p style="left:1067.500px;top:308.300px">Total</p>
<div class="dot" style="left:1078.500px;top:308.300px;width:2.600px;height:2.600px;background:#1a73e8"></div><p style="left:1081px;top:308.300px">Cross-network</p>
<div class="a" style="left:1108px;top:307px;width:2.500px;height:2.500px;background:#5f9e2f"></div><p style="left:1112px;top:308.300px">Direct</p>
<div class="a" style="left:1119px;top:307px;width:2.500px;height:2.500px;background:#f57c00"></div><p style="left:1123px;top:308.300px">Organic Search</p>
<div class="a" style="left:1147px;top:307px;width:2.500px;height:2.500px;background:#1c1c8e"></div><p style="left:1151px;top:308.300px">Unassigned</p>
<div class="a" style="left:1170.500px;top:307px;width:2.500px;height:2.500px;background:#e0218a"></div><p style="left:1175px;top:308.300px">Paid Shopping</p>
</div>
<div class="h" style="left:1062px;top:317.300px;width:380.700px"></div>
<div class="chip" style="left:1063.300px;top:319.700px;width:28.400px;height:6px;border-color:#eceef0"></div>
<p class="g m" style="left:1077.500px;top:322.700px;font-size:3.300px;color:#b0b4b8">Plot rows</p>
<svg class="i" style="left:1103px;top:322.300px;width:5.500px;height:5.500px"><use href="#srch"/></svg>
<p class="g" style="left:1108px;top:322.300px">Search...</p>
<p class="e" style="left:1391.700px;top:322.300px;font-size:3.400px">Rows per page:</p><p style="left:1398px;top:322.300px">10</p><p class="e" style="left:1440.700px;top:322.300px;font-size:3.400px">1-10 of 10</p>
<svg class="i" style="left:1412px;top:322.300px;width:3px;height:3px"><use href="#dn"/></svg>
<div class="h" style="left:1062px;top:327.700px;width:380.700px"></div>
<div class="vv" style="left:1156px;top:328px;height:148.700px;width:.9px"></div>
<div class="a" style="left:1064.300px;top:331px;width:4.800px;height:4.800px;background:#1a73e8;border-radius:.7px"></div><div class="a" style="left:1065.300px;top:333px;width:2.800px;height:.8px;background:#fff"></div>
<div class="chip" style="left:1082.300px;top:331.300px;width:62.700px;height:6px"></div>
<p class="g" style="left:1084px;top:334.300px;font-size:3.300px">First user prim...channel group ▾</p>
<p class="bl m k" style="left:1148.300px;top:334.300px;font-size:5px">+</p>
<div style="font-size:3.300px">
<p class="e u" style="left:1185.300px;top:333.700px">Total users</p><svg class="i" style="left:1164px;top:334px;width:3.500px;height:3.500px"><use href="#darr"/></svg>
<p class="e u" style="left:1219px;top:333.700px">New users</p>
<p class="e u" style="left:1250px;top:333.700px">Returning</p><p class="e u" style="left:1250px;top:338.700px">users</p>
<p class="e u" style="left:1286.700px;top:333.700px">Average</p><p class="e u" style="left:1286.700px;top:338.700px">engagement</p><p class="e u" style="left:1286.700px;top:344px">time per active</p><p class="e u" style="left:1286.700px;top:349.300px">user</p>
<p class="e u" style="left:1316.700px;top:333.700px">Engaged</p><p class="e u" style="left:1316.700px;top:338.700px">sessions</p><p class="e u" style="left:1316.700px;top:344px">per active</p><p class="e u" style="left:1316.700px;top:349.300px">user</p>
<p class="e u" style="left:1353.300px;top:333.700px">Event count</p><p class="e g" style="left:1353.300px;top:339px">All events ▾</p>
<p class="e u" style="left:1394.700px;top:333.700px">Key events</p><p class="e g" style="left:1394.700px;top:339px">All events ▾</p>
<p class="e u" style="left:1438.700px;top:333.700px">User key event</p><p class="e u" style="left:1438.700px;top:338.700px">rate</p><p class="e g" style="left:1438.700px;top:344.500px">All events ▾</p>
</div>
<div class="row" style="left:1062px;top:370px;width:380.700px;height:10.700px"></div>
<div class="row" style="left:1062px;top:391.300px;width:380.700px;height:10.700px"></div>
<div class="row" style="left:1062px;top:412.700px;width:380.700px;height:10.700px"></div>
<div class="row" style="left:1062px;top:434px;width:380.700px;height:10.700px"></div>
<div class="row" style="left:1062px;top:455.300px;width:380.700px;height:10.700px"></div>
<div class="cb" style="left:1066.700px;top:362.700px"></div><div class="cb" style="left:1066.700px;top:375px"></div><div class="cb" style="left:1066.700px;top:385.700px"></div><div class="cb" style="left:1066.700px;top:396.700px"></div><div class="cb" style="left:1066.700px;top:407.300px"></div><div class="cb" style="left:1066.700px;top:418px"></div>
<div class="cu" style="left:1066.700px;top:428.700px"></div><div class="cu" style="left:1066.700px;top:439.300px"></div><div class="cu" style="left:1066.700px;top:450px"></div><div class="cu" style="left:1066.700px;top:460.700px"></div><div class="cu" style="left:1066.700px;top:471.700px"></div>
<p class="g" style="left:1084.300px;top:362.700px;font-size:3.500px">Total</p>
<div style="font-size:3.500px">
<div class="c" style="left:1076px"><p style="top:375px">1</p><p style="top:385.700px">2</p><p style="top:396.700px">3</p><p style="top:407.300px">4</p><p style="top:418px">5</p><p style="top:428.700px">6</p><p style="top:439.300px">7</p><p style="top:450px">8</p><p style="top:460.700px">9</p><p style="top:471.700px;left:-.7px">10</p></div>
<div class="c" style="left:1084.300px"><p class="d" style="top:375px">Cross-network</p><p class="d" style="top:385.700px">Direct</p><p class="d" style="top:396.700px">Organic Search</p><p class="d" style="top:407.300px">Unassigned</p><p class="d" style="top:418px">Paid Shopping</p><p class="d" style="top:428.700px">Referral</p><p class="d" style="top:439.300px">Email</p><p class="d" style="top:450px">Organic Social</p><p class="d" style="top:460.700px">Paid Search</p><p class="d" style="top:471.700px">Organic Shopping</p></div>
<div class="c R t3" style="left:1185.300px"><p>3,066</p><p>100% of total</p><p>2,057 (67.09%)</p><p>436 (14.22%)</p><p>326 (10.37%)</p><p>88 (2.87%)</p><p>83 (2.71%)</p><p>63 (2.05%)</p><p>34 (1.11%)</p><p>28 (0.91%)</p><p>28 (0.91%)</p><p>7 (0.23%)</p></div>
<div class="c R t3" style="left:1219px"><p>2,914</p><p>100% of total</p><p>2,043 (70.11%)</p><p>363 (12.46%)</p><p>279 (9.57%)</p><p>16 (0.55%)</p><p>80 (2.65%)</p><p>57 (1.96%)</p><p>27 (0.93%)</p><p>28 (0.96%)</p><p>15 (0.58%)</p><p>7 (0.24%)</p></div>
<div class="c R t3" style="left:1250px"><p>405</p><p>100% of total</p><p>549 (66.71%)</p><p>102 (12.39%)</p><p>108 (13.12%)</p><p>6 (0.73%)</p><p>7 (0.85%)</p><p>17 (2.07%)</p><p>16 (1.94%)</p><p>1 (0.12%)</p><p>16 (1.94%)</p><p>2 (0.24%)</p></div>
<div class="c R t3" style="left:1286.700px"><p>2m 31s</p><p>Avg 0%</p><p>2m 28s</p><p>2m 02s</p><p>2m 50s</p><p>1m 08s</p><p>54s</p><p>3m 33s</p><p>2m 26s</p><p>1m 40s</p><p>16m 07s</p><p>1m 13s</p></div>
<div class="c R t3" style="left:1316.700px"><p>1.27</p><p>Avg 0%</p><p>1.25</p><p>1.34</p><p>1.33</p><p>0.92</p><p>1.08</p><p>1.29</p><p>1.21</p><p>1.04</p><p>2.34</p><p>1.29</p></div>
<div class="c R t3" style="left:1353.300px"><p>77,961</p><p>100% of total</p><p>51,468 (65.97%)</p><p>10,047 (12.91%)</p><p>8,360 (10.99%)</p><p>1,002 (1.29%)</p><p>1,066 (1.37%)</p><p>2,133 (2.74%)</p><p>912 (1.17%)</p><p>459 (0.6%)</p><p>2,141 (2.75%)</p><p>160 (0.21%)</p></div>
<div class="c R t3" style="left:1394.700px"><p>18,716.00</p><p>100% of total</p><p>11,225.00 (59.98%)</p><p>3,065.00 (16.38%)</p><p>1,977.00 (10.56%)</p><p>210.00 (1.12%)</p><p>509.00 (2.72%)</p><p>673.00 (3.6%)</p><p>257.00 (1.37%)</p><p>175.00 (0.94%)</p><p>582.00 (3.11%)</p><p>42.00 (0.22%)</p></div>
<div class="c R t3" style="left:1438.700px"><p>43.91%</p><p>Avg 0%</p><p>59.22%</p><p>68.13%</p><p>38.88%</p><p>43.18%</p><p>100%</p><p>71.43%</p><p>32.94%</p><p>82.14%</p><p>73.08%</p><p>100%</p></div>
</div>
<p class="g" style="left:1176px;top:496.300px;font-size:3.750px">©2026 Google | <span class="bl">Analytics home</span> | <span class="bl">Terms of Service</span> | <span class="bl">Privacy policy</span> | ▭ Send feedback</p>
</div>

<!-- CARD 4 -->
<div class="card" style="left:1131px;top:510px;width:500.700px;height:236.700px;background:#fff"></div>
<div class="a" style="left:1131px;top:510px;width:13.300px;height:236.700px;background:#fbfbfc;border-right:.7px solid #e6e8ea;border-radius:7px 0 0 7px"></div>
<svg class="a" style="left:1120px;top:500px;width:520px;height:255px;overflow:visible" viewBox="0 0 1560 765">
<g stroke="#eef0f2" stroke-width="2.500"><path d="M110 49H820M110 106H820M110 162H820M110 218H820M110 274H820M110 330H820"/><path d="M1018 45V335M1097 45V335M1176 45V335M1254 45V335M1333 45V335M1411 45V335M1490 45V335"/></g>
<path fill="none" stroke="#dfe1e5" stroke-width="2" d="M733 30V38H853V30"/>
<polygon fill="#e4f2fb" points="110,295 140,133 171,302 202,288 232,304 263,328 294,318 325,330 355,224 386,330 417,330 447,330 478,308 509,130 540,330 570,240 601,330 632,311 662,330 693,296 724,330 755,330 785,298 815,330"/>
<polyline fill="none" stroke="#86c8ee" stroke-width="3" points="110,295 140,133 171,302"/>
<polyline fill="none" stroke="#86c8ee" stroke-width="3" points="540,330 570,240 601,330"/>
<polyline fill="none" stroke="#5f9e2f" stroke-width="3" points="110,330 140,195 171,330 540,329 570,328 601,330"/>
<polyline fill="none" stroke="#1a73e8" stroke-width="3.300" points="110,330 140,270 171,302 202,288 232,304 263,328 294,318 325,330 355,224 386,330 417,330 447,330 478,308 509,130 540,330 570,268 601,330 632,311 662,330 693,296 724,330 755,330 785,298 815,330"/>
<polyline fill="none" stroke="#f7b36b" stroke-width="4" points="140,330 540,330 601,330 815,330"/>
<polyline fill="none" stroke="#f57c00" stroke-width="3" points="110,295 140,330"/>
<polyline fill="none" stroke="#f57c00" stroke-width="3" points="540,330 570,303 601,330"/>
<path fill="#137db8" d="M809 325h12l-6 11z"/>
<rect x="1018" y="84" width="448" height="68" fill="#1a73e8"/><rect x="1018" y="159" width="95" height="68" fill="#1a73e8"/><rect x="1018" y="234" width="44" height="68" fill="#1a73e8"/>
<path fill="#137db8" d="M111 376h11l-5.500 10z"/><circle cx="171" cy="381" r="4.500" fill="#1a73e8"/><rect x="260" y="376" width="9" height="9" fill="#5f9e2f"/><path fill="#f57c00" d="M485 375l6 6-6 6-6-6z"/>
<path fill="none" stroke="#e8710a" stroke-width="3" d="M301 707l7 12h-14z"/>
</svg>
<div class="f4">
<div style="font-size:3.700px"><p class="g" style="left:1396.700px;top:519.300px">kr5k</p><p class="g" style="left:1396.700px;top:538px">kr4k</p><p class="g" style="left:1396.700px;top:556.300px">kr3k</p><p class="g" style="left:1396.700px;top:575px">kr2k</p><p class="g" style="left:1396.700px;top:594px">kr1k</p><p class="g" style="left:1393px;top:612.300px">kr0.00</p>
<p class="g" style="left:1156.500px;top:613.700px">01</p><p class="g" style="left:1156.500px;top:618px">Feb</p><p class="g" style="left:1226px;top:613.700px">08</p><p class="g" style="left:1298px;top:613.700px">15</p><p class="g" style="left:1367px;top:613.700px">22</p>
<p class="g m" style="left:1459.300px;top:615.700px">kr0.00</p><p class="g m" style="left:1485.700px;top:615.700px">kr2k</p><p class="g m" style="left:1512px;top:615.700px">kr4k</p><p class="g m" style="left:1538px;top:615.700px">kr6k</p><p class="g m" style="left:1564.300px;top:615.700px">kr8k</p><p class="g m" style="left:1590.300px;top:615.700px">kr10k</p><p class="g m" style="left:1616.700px;top:615.700px">kr12k</p></div>
<div style="font-size:3.800px"><p style="left:1425.700px;top:539.300px">google / cpc</p><p style="left:1425.700px;top:562px">v1.checkout.ba</p><p style="left:1425.700px;top:566.300px">mbora.com /...</p><p style="left:1425.700px;top:587px">(direct) /</p><p style="left:1425.700px;top:591.700px">(none)</p>
<p style="left:1162.700px;top:627px">Total</p><p style="left:1180.700px;top:627px">google / cpc</p><p style="left:1212px;top:627px">v1.checkout.bambora.com / referral</p><p style="left:1285.300px;top:627px">(direct) / (none)</p></div>
<div class="hh" style="left:1155px;top:638px;width:466px"></div>
<svg class="i" style="left:1160.300px;top:645.700px;width:6.500px;height:6.500px"><use href="#srch"/></svg>
<p class="g" style="left:1167px;top:645.700px;font-size:4.400px">Search...</p>
<div style="font-size:4px"><p class="e" style="left:1497.700px;top:645.700px">Rows per page:</p><p style="left:1506px;top:645.700px;font-size:4.500px">10</p><p style="left:1541px;top:645.700px">Go to:</p><p style="left:1562px;top:645.700px;font-size:4.500px">1</p><p class="m" style="left:1583.500px;top:645.700px;font-size:8px;color:#5f6368">‹</p><p style="left:1590px;top:645.700px">1-10 of 16</p><p class="m" style="left:1617.500px;top:645.700px;font-size:8px;color:#202124">›</p></div>
<svg class="i" style="left:1524px;top:645.700px;width:4px;height:4px"><use href="#dn"/></svg>
<div class="hh" style="left:1155px;top:652px;width:466px"></div>
<div class="row" style="left:1155px;top:693.300px;width:466px;height:12px"></div>
<div class="row" style="left:1155px;top:719.300px;width:466px;height:13px"></div>
<div class="row" style="left:1155px;top:744.300px;width:466px;height:2.400px"></div>
<div class="h" style="left:1155px;top:693px;width:466px"></div><div class="h" style="left:1155px;top:705.300px;width:466px"></div><div class="h" style="left:1155px;top:719.300px;width:466px"></div><div class="h" style="left:1155px;top:732.300px;width:466px"></div><div class="h" style="left:1155px;top:744.300px;width:466px"></div>
<div class="vv" style="left:1258.200px;top:652.500px;height:94.200px"></div>
<div class="chip" style="left:1171px;top:657px;width:73.300px;height:8px"></div>
<p class="g" style="left:1174px;top:661px;font-size:4.200px">First user source / medium ▾</p>
<p class="bl m k" style="left:1249px;top:660.700px;font-size:6px">+</p>
<p class="g" style="left:1174px;top:683.700px">Total</p>
<p style="left:1160px;top:699.300px;font-size:4.200px">1</p><p style="left:1160px;top:712.300px;font-size:4.200px">2</p><p style="left:1160px;top:725.700px;font-size:4.200px">3</p><p style="left:1160px;top:738px;font-size:4.200px">4</p>
<p class="d" style="left:1174px;top:699.300px">google / cpc</p><p class="d" style="left:1174px;top:709px">v1.checkout.bambora.com /</p><p class="d" style="left:1174px;top:715.700px">referral</p><p class="d" style="left:1174px;top:725.700px">(direct) / (none)</p><p class="d" style="left:1174px;top:738px">(data not available)</p>
<div style="font-size:4.400px">
<p class="e u" style="left:1309px;top:660px">Items viewed in</p><p class="e u" style="left:1309px;top:666.300px">list</p>
<p class="e u" style="left:1353.300px;top:660px">Items</p><p class="e u" style="left:1353.300px;top:666.300px">viewed</p>
<p class="e u" style="left:1408px;top:660px">Items added to</p><p class="e u" style="left:1408px;top:666.300px">cart</p>
<p class="e u" style="left:1460px;top:660px">Items checked</p><p class="e u" style="left:1460px;top:666.300px">out</p>
<p class="e u" style="left:1509.300px;top:660px">Items</p><p class="e u" style="left:1509.300px;top:666.300px">purchased</p>
<p class="e u" style="left:1559px;top:660px">Total</p><p class="e u" style="left:1559px;top:666.300px">purchasers</p>
<p class="e u" style="left:1616px;top:660px">Item revenue</p><svg class="i" style="left:1582.500px;top:660.200px;width:4.500px;height:4.500px"><use href="#darr"/></svg>
</div>
<div class="c R t4" style="left:1309px"><p>310,653</p><p>100% of total</p><p>219,168 (70.55%)</p><p>0 (0%)</p><p>36,724 (11.82%)</p><p>5,109 (1.64%)</p></div>
<div class="c R t4" style="left:1353.300px"><p>3,439</p><p>100% of total</p><p>2,374 (69.03%)</p><p>0 (0%)</p><p>425 (12.36%)</p><p>35 (1.02%)</p></div>
<div class="c R t4" style="left:1408px"><p>1,502</p><p>100% of total</p><p>1,084 (72.17%)</p><p>0 (0%)</p><p>154 (10.25%)</p><p>38 (2.53%)</p></div>
<div class="c R t4" style="left:1460px"><p>444</p><p>100% of total</p><p>332 (74.77%)</p><p>0 (0%)</p><p>66 (14.86%)</p><p>10 (2.25%)</p></div>
<div class="c R t4" style="left:1509.300px"><p>63</p><p>100% of total</p><p>47 (74.6%)</p><p>9 (14.29%)</p><p>7 (11.11%)</p><p>0 (0%)</p></div>
<div class="c R t4" style="left:1559px"><p>21</p><p>100% of total</p><p>18 (85.71%)</p><p>1 (4.76%)</p><p>2 (9.52%)</p><p>0 (0%)</p></div>
<div class="c R t4" style="left:1616px"><p>kr14,977.00</p><p>100% of total</p><p>kr11,433.00 (76.34%)</p><p>kr2,421.00 (16.16%)</p><p>kr1,123.00 (7.5%)</p><p>kr0.00 (0%)</p></div>
</div>
</div>
</body></html>
